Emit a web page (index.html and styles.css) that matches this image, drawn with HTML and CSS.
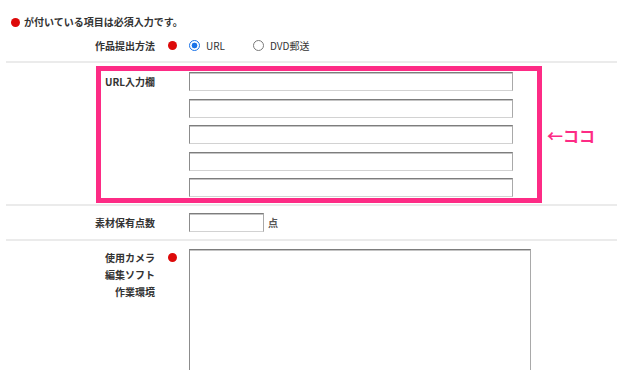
FILE: index.html
```html
<!DOCTYPE html>
<html lang="ja">
<head>
<meta charset="utf-8">
<title>作品応募フォーム</title>
<link rel="stylesheet" href="styles.css">
</head>
<body>
<div class="page">
  <p class="notice"><span class="dot"></span>が付いている項目は必須入力です。</p>

  <div class="row row-method">
    <div class="label">作品提出方法</div>
    <div class="mark"><span class="dot"></span></div>
    <div class="field radios">
      <label class="radio"><input type="radio" name="method" checked><span>URL</span></label>
      <label class="radio"><input type="radio" name="method"><span>DVD郵送</span></label>
    </div>
  </div>

  <div class="row row-url">
    <div class="highlight">
      <div class="label label-url">URL入力欄</div>
      <div class="mark"></div>
      <div class="field stack">
        <input class="text url" type="text">
        <input class="text url" type="text">
        <input class="text url" type="text">
        <input class="text url" type="text">
        <input class="text url" type="text">
      </div>
    </div>
    <div class="callout">←ココ</div>
  </div>

  <div class="row row-count">
    <div class="label">素材保有点数</div>
    <div class="mark"></div>
    <div class="field inline">
      <input class="text small" type="text"><span class="unit">点</span>
    </div>
  </div>

  <div class="row row-env">
    <div class="label multi">使用カメラ<br>編集ソフト<br>作業環境</div>
    <div class="mark top"><span class="dot"></span></div>
    <div class="field">
      <textarea class="area"></textarea>
    </div>
  </div>
</div>
</body>
</html>
```

FILE: styles.css
```css
html, body {
  margin: 0;
  padding: 0;
  background: #fff;
}

body {
  font-family: "Noto Sans CJK JP", "Noto Sans", sans-serif;
  font-size: 10px;
  color: #333;
}

.page {
  width: 611px;
  margin-left: 6px;
}

.dot {
  display: inline-block;
  width: 9px;
  height: 9px;
  border-radius: 50%;
  background: #dd0a0a;
}

.notice {
  margin: 0;
  padding: 14px 0 0 5px;
  height: 16px;
  line-height: 16px;
  font-weight: bold;
  display: flex;
  align-items: center;
}

.notice .dot {
  margin-right: 4px;
}

.row {
  display: flex;
  border-bottom: 2px solid #ebebeb;
}

.label {
  width: 149px;
  flex: none;
  text-align: right;
  font-weight: bold;
  line-height: 16px;
}

.mark {
  width: 34px;
  flex: none;
  display: flex;
  justify-content: center;
}

.mark.top {
  align-items: flex-start;
  padding-top: 4px;
  box-sizing: border-box;
}

.row-method {
  height: 31px;
  align-items: center;
}

.row-method .mark {
  align-items: center;
}

.radios {
  display: flex;
  align-items: center;
}

.radio {
  display: flex;
  align-items: center;
  margin-right: 28px;
}

.radio input {
  -webkit-appearance: none;
  appearance: none;
  width: 11px;
  height: 11px;
  margin: 0 6px 0 0;
  border: 1px solid #7a7a7a;
  border-radius: 50%;
  background: #fff;
  box-sizing: border-box;
}

.radio input:checked {
  border-color: #1a73e8;
  background: radial-gradient(circle, #1a73e8 0 2.6px, #fff 3.2px);
}

.row-url {
  padding: 3px 0 1px;
  align-items: center;
}

.highlight {
  display: flex;
  margin-left: 90px;
  border: 5px solid #fd2b85;
  padding: 1px 24px 1px 0;
}

.label-url {
  width: 54px;
  padding-top: 2px;
}

.stack {
  display: flex;
  flex-direction: column;
  gap: 7.5px;
}

.text {
  box-sizing: border-box;
  height: 19px;
  margin: 0;
  padding: 0 3px;
  border: 1px solid;
  border-color: #7d7d7d #a9a9a9 #d2d2d2 #8c8c8c;
  box-shadow: inset 0 1px 0 #c4c4c4;
  background: #fff;
  font: inherit;
}

.url {
  width: 324px;
}

.callout {
  margin-left: 5px;
  color: #fd2b85;
  font-size: 16px;
  font-weight: bold;
  line-height: 20px;
}

.row-count {
  padding: 7px 0;
  align-items: center;
}

.inline {
  display: flex;
  align-items: center;
}

.small {
  width: 75px;
}

.unit {
  margin-left: 4px;
  font-weight: bold;
  color: #555;
}

.row-env {
  padding-top: 8px;
  border-bottom: none;
}

.label.multi {
  line-height: 17px;
}

.area {
  display: block;
  box-sizing: border-box;
  width: 342px;
  height: 121px;
  margin: 0;
  border: 1px solid;
  border-bottom: none;
  border-color: #7d7d7d #a9a9a9 #d2d2d2 #8c8c8c;
  box-shadow: inset 0 1px 0 #c4c4c4;
  resize: none;
  font: inherit;
}
```
